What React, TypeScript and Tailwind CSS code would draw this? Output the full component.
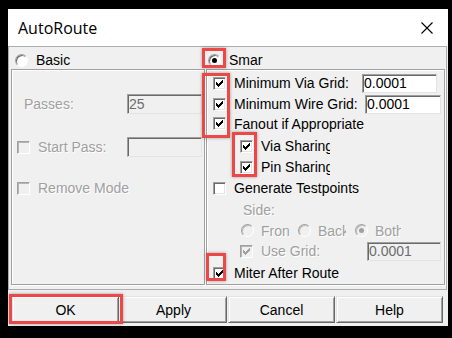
import React from "react";

// classic Win32 style controls
const CHECK_COLS: [number, number][] = [
  [0, 2],
  [1, 3],
  [2, 4],
  [3, 3],
  [4, 2],
  [5, 1],
  [6, 0],
];

function Check({ checked = false, disabled = false }: { checked?: boolean; disabled?: boolean }) {
  return (
    <span
      className={`relative block w-[13px] h-[13px] shrink-0 border border-t-[#a0a0a0] border-l-[#a0a0a0] border-r-white border-b-white ${
        disabled
          ? "bg-[#f0f0f0] shadow-[inset_1px_1px_0_#b4b4b4]"
          : "bg-white shadow-[inset_1px_1px_0_#696969,inset_-1px_-1px_0_#e3e3e3]"
      }`}
    >
      {checked && (
        <svg className="absolute left-[2px] top-[2px]" width="7" height="7" viewBox="0 0 7 7" shapeRendering="crispEdges">
          {CHECK_COLS.map(([x, y]) => (
            <rect key={x} x={x} y={y} width="1" height="3" fill={disabled ? "#a0a0a0" : "#000"} />
          ))}
        </svg>
      )}
    </span>
  );
}

function Radio({ on = false, disabled = false }: { on?: boolean; disabled?: boolean }) {
  return (
    <span
      className={`flex items-center justify-center w-[13px] h-[13px] shrink-0 rounded-full border border-t-[#a0a0a0] border-l-[#a0a0a0] border-r-[#ffffff] border-b-[#ffffff] ${
        disabled
          ? "bg-[#f0f0f0] shadow-[inset_1px_1px_0_#c0c0c0]"
          : "bg-white shadow-[inset_1px_1px_0_#696969]"
      }`}
    >
      {on && <span className={`block w-[5px] h-[5px] rounded-full ${disabled ? "bg-[#a0a0a0]" : "bg-black"}`} />}
    </span>
  );
}

function Field({ value, className, disabled = false }: { value: string; className: string; disabled?: boolean }) {
  return (
    <div
      className={`${className} shrink-0 flex items-center pl-[1px] overflow-hidden border border-t-[#a0a0a0] border-l-[#a0a0a0] border-r-[#e3e3e3] border-b-[#e3e3e3] shadow-[inset_1px_1px_0_#696969] text-[14px] leading-[16px] ${
        disabled ? "bg-[#f0f0f0] text-[#6d6d6d]" : "bg-white text-black"
      }`}
    >
      {value}
    </div>
  );
}

const dim = "text-[#a0a0a0] [text-shadow:1px_1px_0_#ffffff]";
const group =
  "h-[216px] shrink-0 border border-[#a0a0a0] shadow-[inset_1px_1px_0_#ffffff,1px_1px_0_#ffffff] flex flex-col";

export default function App() {
  return (
    <div className="relative w-[452px] h-[338px] bg-black overflow-hidden pl-[8px] pt-[9px] font-['Liberation_Sans',Arial,sans-serif] text-[14px] leading-[16px] text-black">
      <div className="w-[440px] h-[317px] bg-[#f0f0f0] flex flex-col">
        {/* title bar */}
        <div className="h-[37px] bg-white flex items-center justify-between pl-[10px] pr-[15px]">
          <span className="font-['Open_Sans',sans-serif] text-[16px] leading-[20px]">AutoRoute</span>
          <svg width="12" height="12" viewBox="0 0 12 12">
            <path d="M0.5 0.5 L11.5 11.5 M11.5 0.5 L0.5 11.5" stroke="#000" strokeWidth="1.1" />
          </svg>
        </div>

        {/* main frame */}
        <div className="w-[439px] h-[244px] border border-[#adadad] flex flex-col">
          <div className="h-[22px] pt-[4px] flex items-center pl-[2px]">
            <div className="w-[195px] flex items-center pl-[4px]">
              <Radio />
              <span className="ml-[8px]">Basic</span>
            </div>
            <div className="flex items-center pl-[2px]">
              <Radio on />
              <span className="ml-[8px] w-[34px] overflow-hidden whitespace-nowrap">Smart</span>
            </div>
          </div>

          <div className="flex pl-[2px] gap-[1px]">
            {/* Basic */}
            <div className={`${group} w-[194px]`}>
              <div className="mt-[24px] h-[20px] flex items-center">
                <span className={`pl-[12px] w-[115px] ${dim}`}>Passes:</span>
                <Field value="25" className="w-[75px] h-[20px]" disabled />
              </div>
              <div className="mt-[23px] h-[20px] flex items-center pl-[5px]">
                <Check disabled />
                <span className={`ml-[8px] w-[89px] ${dim}`}>Start Pass:</span>
                <Field value="" className="w-[75px] h-[20px]" disabled />
              </div>
              <div className="mt-[21px] h-[20px] flex items-center pl-[5px]">
                <Check disabled />
                <span className={`ml-[8px] ${dim}`}>Remove Mode</span>
              </div>
            </div>

            {/* Smart */}
            <div className={`${group} w-[239px]`}>
              <div className="mt-[3px] h-[20px] flex items-center pl-[6px]">
                <Check checked />
                <span className="ml-[8px] w-[128px] whitespace-nowrap">Minimum Via Grid:</span>
                <Field value="0.0001" className="w-[75px] h-[19px]" />
              </div>
              <div className="mt-[1px] h-[20px] flex items-center pl-[6px]">
                <Check checked />
                <span className="ml-[8px] w-[131px] whitespace-nowrap">Minimum Wire Grid:</span>
                <Field value="0.0001" className="w-[76px] h-[19px]" />
              </div>
              <div className="h-[19px] flex items-center pl-[6px]">
                <Check checked />
                <span className="ml-[8px]">Fanout if Appropriate</span>
              </div>
              <div className="mt-[3px] h-[20px] flex items-center pl-[33px]">
                <Check checked />
                <span className="ml-[8px] w-[69px] overflow-hidden whitespace-nowrap">Via Sharing</span>
              </div>
              <div className="mt-[1px] h-[20px] flex items-center pl-[33px]">
                <Check checked />
                <span className="ml-[8px] w-[69px] overflow-hidden whitespace-nowrap">Pin Sharing</span>
              </div>
              <div className="mt-[1px] h-[20px] flex items-center pl-[6px]">
                <Check />
                <span className="ml-[8px]">Generate Testpoints</span>
              </div>
              <div className="mt-[2px] h-[20px] flex items-center pl-[36px]">
                <span className={dim}>Side:</span>
              </div>
              <div className="mt-[1px] h-[19px] flex items-center pl-[34px]">
                <Radio disabled />
                <span className={`ml-[7px] w-[29px] overflow-hidden whitespace-nowrap ${dim}`}>Front</span>
                <span className="ml-[8px]" />
                <Radio disabled />
                <span className={`ml-[7px] w-[28px] overflow-hidden whitespace-nowrap ${dim}`}>Back</span>
                <span className="ml-[9px]" />
                <Radio on disabled />
                <span className={`ml-[7px] w-[26px] overflow-hidden whitespace-nowrap ${dim}`}>Both</span>
              </div>
              <div className="mt-[1px] h-[20px] flex items-center pl-[33px]">
                <Check checked disabled />
                <span className={`ml-[8px] w-[106px] ${dim}`}>Use Grid:</span>
                <Field value="0.0001" className="w-[74px] h-[19px]" disabled />
              </div>
              <div className="mt-[2px] h-[20px] flex items-center pl-[6px]">
                <Check checked />
                <span className="ml-[8px]">Miter After Route</span>
              </div>
            </div>
          </div>
        </div>

        {/* buttons */}
        <div className="mt-[6px] pl-[4px] flex gap-[1px]">
          {["OK", "Apply", "Cancel", "Help"].map((b) => (
            <div
              key={b}
              className="w-[107px] h-[27px] flex items-center justify-center border border-t-[#e3e3e3] border-l-[#e3e3e3] border-r-[#696969] border-b-[#696969] shadow-[inset_1px_1px_0_#ffffff,inset_-1px_-1px_0_#a0a0a0]"
            >
              {b}
            </div>
          ))}
        </div>
      </div>

      {/* red annotation boxes */}
      <div className="absolute left-[202px] top-[48px] w-[24px] h-[20px] border-[3px] border-[#ec4848] shadow-[0_0_3px_rgba(0,0,0,0.35)]" />
      <div className="absolute left-[202px] top-[73px] w-[28px] h-[65px] border-[3px] border-[#ec4848] shadow-[0_0_3px_rgba(0,0,0,0.35)]" />
      <div className="absolute left-[232px] top-[132px] w-[25px] h-[45px] border-[3px] border-[#ec4848] shadow-[0_0_3px_rgba(0,0,0,0.35)]" />
      <div className="absolute left-[206px] top-[253px] w-[20px] h-[28px] border-[3px] border-[#ec4848] shadow-[0_0_3px_rgba(0,0,0,0.35)]" />
      <div className="absolute left-[9px] top-[294px] w-[114px] h-[30px] border-[3px] border-[#ec4848] shadow-[0_0_3px_rgba(0,0,0,0.35)]" />
    </div>
  );
}
